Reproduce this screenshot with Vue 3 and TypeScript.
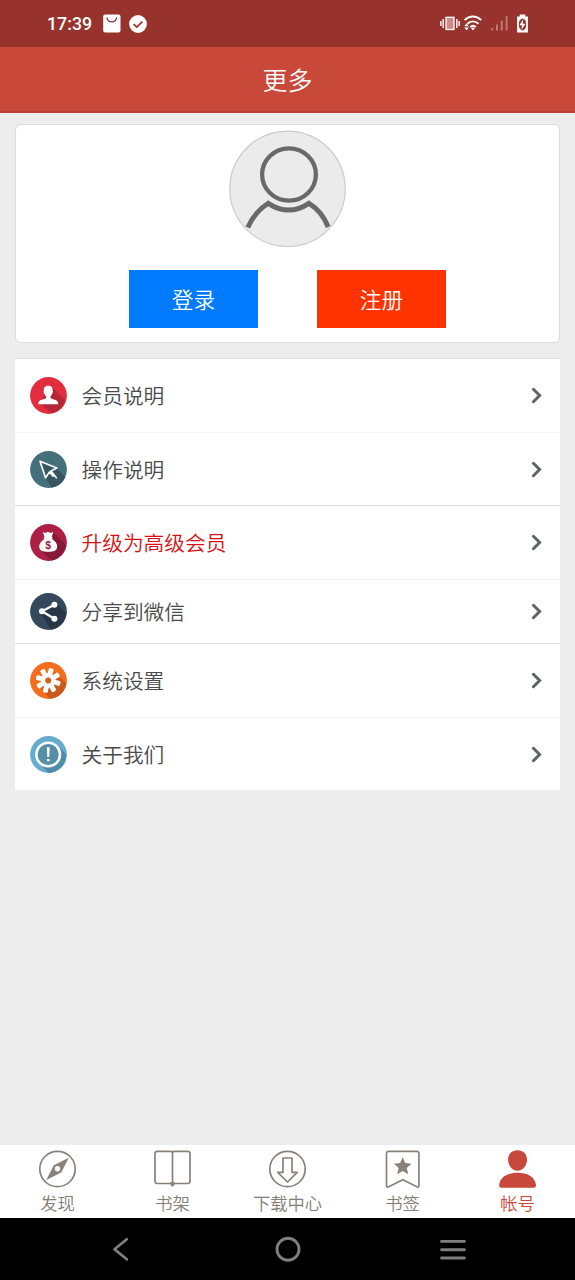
<script setup lang="ts">
type MenuIcon = 'user' | 'cursor' | 'money' | 'share' | 'gear' | 'info'
type TabIcon = 'compass' | 'book' | 'download' | 'bookmark' | 'account'

interface MenuItem {
  icon: MenuIcon
  label: string
  vip?: boolean
}

const menu: MenuItem[] = [
  { icon: 'user', label: '会员说明' },
  { icon: 'cursor', label: '操作说明' },
  { icon: 'money', label: '升级为高级会员', vip: true },
  { icon: 'share', label: '分享到微信' },
  { icon: 'gear', label: '系统设置' },
  { icon: 'info', label: '关于我们' },
]

const tabs: { icon: TabIcon; label: string }[] = [
  { icon: 'compass', label: '发现' },
  { icon: 'book', label: '书架' },
  { icon: 'download', label: '下载中心' },
  { icon: 'bookmark', label: '书签' },
  { icon: 'account', label: '帐号' },
]

const teeth: number[] = [15, 60, 105, 150, 195, 240, 285, 330]
</script>

<template>
  <div class="screen">
    <div class="status">
      <div class="status-left">
        <span class="clock">17:39</span>
        <svg class="s-bag" width="18" height="19" viewBox="0 0 18 19">
          <rect x="0.2" y="0.5" width="17.3" height="18" rx="2" fill="#fff" />
          <path d="M4 3.4c.5 6 9 6 9.6 0" fill="none" stroke="#97332c" stroke-width="1.2" />
        </svg>
        <svg class="s-check" width="18" height="18" viewBox="0 0 18 18">
          <circle cx="9" cy="9" r="8.9" fill="#fff" />
          <path d="M4.6 9.1l3.2 3 5.6-5.4" fill="none" stroke="#97332c" stroke-width="1.8" />
        </svg>
      </div>
      <div class="status-right">
        <svg width="94" height="20" viewBox="0 0 94 20">
          <rect x="6" y="3.3" width="8" height="12.2" fill="#cc8a88" stroke="#fff" stroke-width="1.3" />
          <path d="M0.9 7.1v4.8M3.2 5v9M16.8 5v9M19.1 7.1v4.8" stroke="#fff" stroke-width="1.4" />
          <g fill="none" stroke="#fff" stroke-width="2">
            <path d="M24.6 6.1c4.9-4.8 11.7-4.8 16.6 0" />
            <path d="M27.4 9.8c3.4-3.2 7.7-3.2 11.1 0" />
            <path d="M30.3 13.1c1.8-1.6 3.8-1.6 5.5 0" />
          </g>
          <path d="M30.9 13.8h4.2L33 16.6zM24.3 12.2l2.3-3 2.3 3zM24.3 13.6l2.3 3 2.3-3z" fill="#fff" />
          <path d="M52.3 14v2.5M57 10.5v6M61.8 6.8v9.7M66.6 2.3v14.2" stroke="#c17772" stroke-width="2" />
          <path d="M79.7 0.4h5.6v2.1h2.6v16H77.1v-16h2.6z" fill="#fff" />
          <ellipse cx="82.5" cy="10.5" rx="3.7" ry="6" fill="#97332c" />
          <path d="M83.3 5l-3.9 6.2h2.6l-.6 4.9 4-6.3h-2.7z" fill="#fff" />
        </svg>
      </div>
    </div>

    <header class="header">更多</header>

    <main class="content">
      <section class="profile">
        <svg class="avatar" width="117" height="117" viewBox="0 0 117 117">
          <circle cx="58.5" cy="58.8" r="57.7" fill="#ebebeb" stroke="#cbcbcb" stroke-width="1.2" />
          <ellipse cx="60" cy="44.5" rx="26.9" ry="26.2" fill="none" stroke="#696969" stroke-width="4.3" />
          <path
            d="M18.8 97.5C23.5 87 30 78.9 39.2 73.3C52.8 82.2 66.6 82.2 79.9 73.3C89 78.7 94.8 85.9 99.2 97"
            fill="none" stroke="#696969" stroke-width="5"
          />
        </svg>
        <div class="actions">
          <button class="btn login">登录</button>
          <button class="btn register">注册</button>
        </div>
      </section>

      <ul class="menu">
        <li v-for="item in menu" :key="item.icon" class="row" :class="item.icon">
          <svg class="row-icon" width="37" height="37" viewBox="0 0 37 37">
            <template v-if="item.icon === 'user'">
              <circle cx="18.5" cy="18.5" r="18.4" fill="#e12d3d" />
              <path d="M22 10l13 13a18.4 18.4 0 0 1-13 13.2L9 26z" fill="#b42736" />
              <path
                d="M18.4 8.8c-3.3 0-4.9 1.9-4.5 4.7-.8.6-.3 2.6.5 2.9.3 1.3.9 2.1 1.7 2.8v1.8c-1.9 1.5-6.6 1.5-7.5 4.1-.3.7-.3 1.5-.3 2.2h19.9c0-.8 0-1.5-.3-2.2-1-2.6-5.6-2.6-7.4-4.1v-1.8c.8-.7 1.3-1.5 1.6-2.8.8-.3 1.3-2.3.5-2.9.4-2.8-1.2-4.7-4.2-4.7z"
                fill="#fff"
              />
            </template>
            <template v-else-if="item.icon === 'cursor'">
              <circle cx="18.5" cy="18.5" r="18.4" fill="#44707b" />
              <path d="M10 10.5l16.6 6.700 8.800 8.700a18.400 18.400 0 0 1-13.700 10.800L15.800 27z" fill="#365662" />
              <path
                d="M10 10.300l16.800 6.700-5.800 3 5.300 6.800M10 10.300l5.600 16.400 3.900-5.800 3.600 4.200"
                fill="none" stroke="#fff" stroke-width="1.700" stroke-linejoin="round" stroke-linecap="round"
              />
            </template>
            <template v-else-if="item.icon === 'money'">
              <circle cx="18.500" cy="18.500" r="18.400" fill="#ae1f45" />
              <path d="M23 8l12.800 13A18.400 18.400 0 0 1 21 36.600L11 26.500z" fill="#85193a" />
              <path
                d="M12.800 8l2.600.9L18 7.700l2.400 1.200L23.300 8l-1.500 4.800c1.100.8 1.100 1.400.2 2.100 3.500 2 5.200 4.800 5.200 7.500 0 3.900-3.300 5.400-8.900 5.400s-9.100-1.500-9.100-5.400c0-2.700 1.900-5.500 5.200-7.500-.9-.7-.9-1.300.2-2.100z"
                fill="#fff"
              />
              <text x="18.200" y="24.500" class="dollar">$</text>
            </template>
            <template v-else-if="item.icon === 'share'">
              <circle cx="18.500" cy="18.500" r="18.400" fill="#34495c" />
              <path d="M26.500 10.500l9.800 9.800A18.400 18.400 0 0 1 21.200 36.700L10 20z" fill="#273747" />
              <path d="M24.400 11.800L12 18.300l12.400 7.400" fill="none" stroke="#fff" stroke-width="2.200" />
              <circle cx="24.400" cy="11.800" r="3" fill="#fff" />
              <circle cx="12" cy="18.300" r="3" fill="#fff" />
              <circle cx="24.400" cy="25.700" r="3" fill="#fff" />
            </template>
            <template v-else-if="item.icon === 'gear'">
              <circle cx="18.500" cy="18.500" r="18.400" fill="#f56d1d" />
              <path d="M25 10l11.400 11.500A18.400 18.400 0 0 1 20 36.800L11 27z" fill="#c95a1b" />
              <path
                v-for="a in teeth" :key="a" d="M15.700 6.500q2.500-1.200 5 0L20.600 14h-4.800z"
                fill="#fff" :transform="`rotate(${a} 18.2 18.5)`"
              />
              <circle cx="18.200" cy="18.500" r="5" fill="none" stroke="#fff" stroke-width="4.600" />
              <circle cx="18.200" cy="18.500" r="2.900" fill="#d9601c" />
            </template>
            <template v-else>
              <circle cx="18.500" cy="18.500" r="18.400" fill="#65acce" />
              <path d="M27.500 9.500l8.700 8.700A18.400 18.400 0 0 1 18.800 36.900L9.300 27.400z" fill="#4e8ca8" />
              <circle cx="18.200" cy="18.500" r="11.800" fill="#568fa8" stroke="#fff" stroke-width="2.500" />
              <path d="M16.800 11.200h2.900l-.5 9.900h-1.900zM17 23h2.500v2.300H17z" fill="#fff" />
            </template>
          </svg>
          <span class="row-label" :class="{ vip: item.vip }">{{ item.label }}</span>
          <svg class="chevron" width="12" height="17" viewBox="0 0 12 17">
            <path d="M2.400 2.300l6.200 6.200-6.200 6.200" fill="none" stroke="#606366" stroke-width="3" stroke-linecap="round" />
          </svg>
        </li>
      </ul>
    </main>

    <nav class="tabs">
      <div v-for="tab in tabs" :key="tab.icon" class="tab" :class="{ active: tab.icon === 'account' }">
        <svg width="39" height="40" viewBox="0 0 39 40" fill="none" stroke="#8a8279" stroke-width="1.700">
          <template v-if="tab.icon === 'compass'">
            <circle cx="19.500" cy="20" r="17.700" />
            <path d="M30.800 8.700L23.200 23.500 8.300 31l7.500-14.700z" fill="#8a8279" stroke="none" />
            <circle cx="19.500" cy="19.700" r="2.700" fill="#fff" stroke="none" />
          </template>
          <template v-else-if="tab.icon === 'book'">
            <path d="M19.500 34.500H4.200q-2.200 0-2.200-2.200V4.500q0-2.200 2.200-2.200h13.500q1.800 0 1.800 1.500 0-1.500 1.800-1.500h13.500q2.200 0 2.200 2.200v27.800q0 2.200-2.200 2.200H19.500zM19.500 3.800v30.700" />
            <path d="M16.500 34.500l1.500-1.500h3l1.500 1.500-3 3.500z" fill="#8a8279" stroke="none" />
          </template>
          <template v-else-if="tab.icon === 'download'">
            <circle cx="19.500" cy="20" r="17.700" />
            <path d="M15 9h9v14.300h5.200L19.500 33l-9.700-9.700H15z" stroke-linejoin="round" />
          </template>
          <template v-else-if="tab.icon === 'bookmark'">
            <path d="M3.500 36.500V4.500q0-2.200 2.200-2.200h28q2.200 0 2.200 2.200v32q0 2.300-2.100 1.300l-14-7-14.100 7q-2.200 1-2.200-1.300z" />
            <path d="M19.700 8.200l2.600 5.900 6.200.6-4.700 4.200 1.400 6.400-5.500-3.300-5.500 3.300 1.400-6.400-4.700-4.200 6.200-.6z" fill="#8a8279" stroke="none" />
          </template>
          <template v-else>
            <path d="M19.500 1.300c-5.800 0-9.400 3.900-9.400 9.200 0 6 3.900 11.200 9.400 11.200S29 16.500 29 10.500c0-5.300-3.700-9.200-9.500-9.200z" fill="#c8483a" stroke="none" />
            <path d="M1.100 36.200C1.800 28.300 9.200 23.800 19.600 23.800S37.300 28.300 38 36.200q.2 2.600-2.300 2.600H3.400q-2.500 0-2.300-2.600z" fill="#c8483a" stroke="none" />
          </template>
        </svg>
        <span>{{ tab.label }}</span>
      </div>
    </nav>

    <div class="system-nav">
      <svg width="18" height="25" viewBox="0 0 18 25"><path d="M14.800 2.200L2.500 12.300l12.300 10" fill="none" stroke="#808080" stroke-width="2.700" stroke-linecap="round" stroke-linejoin="round" /></svg>
      <svg class="home" width="26" height="26" viewBox="0 0 26 26"><circle cx="13" cy="13.300" r="11" fill="none" stroke="#808080" stroke-width="2.900" /></svg>
      <svg width="26" height="22" viewBox="0 0 26 22"><path d="M1.600 3.400h22.800M1.600 11.700h22.800M1.600 20h22.800" stroke="#808080" stroke-width="2.900" stroke-linecap="round" /></svg>
    </div>
  </div>
</template>

<style>
body {
  background: #ededed;
}
</style>

<style scoped>
.screen {
  width: 575px;
  height: 1280px;
  display: flex;
  flex-direction: column;
  background: #ededed;
  font-family: "Noto Sans CJK SC", sans-serif;
  font-weight: 350;
  overflow: hidden;
}
svg {
  display: block;
  flex: none;
}
.status {
  height: 47px;
  flex: none;
  box-sizing: border-box;
  padding: 0 41px 0 47px;
  display: flex;
  align-items: center;
  justify-content: space-between;
  background: #97332c;
}
.status-left {
  display: flex;
  align-items: center;
}
.clock {
  width: 56px;
  padding-top: 1px;
  font: 500 17.800px/24px Roboto, sans-serif;
  color: #fff;
}
.s-check {
  margin-left: 8px;
}
.header {
  height: 66px;
  flex: none;
  box-sizing: border-box;
  border-bottom: 2px solid #b94238;
  background: #c8483a;
  color: #fff;
  font-size: 25px;
  line-height: 65px;
  text-align: center;
}
.content {
  flex: 1;
  padding: 11px 15px 0;
}
.profile {
  box-sizing: border-box;
  height: 219px;
  padding-top: 5px;
  border: 1px solid #dcdcdc;
  border-radius: 6px;
  background: #fff;
  display: flex;
  flex-direction: column;
  align-items: center;
}
.actions {
  display: flex;
  gap: 59px;
  margin-top: 23px;
}
.btn {
  width: 129px;
  height: 58px;
  padding: 0 0 1px;
  border: 0;
  color: #fff;
  font: inherit;
  font-size: 21.700px;
}
.login {
  background: #007aff;
}
.register {
  background: #ff3300;
}
.menu {
  margin: 15px 0 0;
  padding: 0;
  list-style: none;
  background: #fff;
}
.row {
  box-sizing: border-box;
  height: 74px;
  padding: 0 17px 0 14.500px;
  display: flex;
  align-items: center;
  border-top: 1px solid #f4f4f4;
}
.row.user,
.row.money,
.row.gear {
  border-top-color: #dedede;
}
.row.cursor,
.row.info {
  height: 73px;
}
.row.share {
  height: 64px;
}
.row-label {
  flex: 1;
  margin-left: 15px;
  padding-bottom: 1px;
  font-size: 20.700px;
  line-height: 30px;
  color: #4a4a4a;
}
.row.cursor .row-label,
.row.info .row-label {
  padding-bottom: 0;
}
.row-label.vip {
  color: #d60f15;
}
.dollar {
  font: 700 10.500px "Liberation Sans", sans-serif;
  fill: #8f1c3e;
  text-anchor: middle;
}
.tabs {
  height: 73px;
  flex: none;
  display: grid;
  grid-template-columns: repeat(5, 1fr);
  background: #fff;
}
.tab {
  display: flex;
  flex-direction: column;
  align-items: center;
  padding-top: 4px;
  color: #857e76;
  font-size: 17.300px;
  line-height: 27px;
}
.tab.active {
  color: #c8483a;
}
.system-nav {
  height: 62px;
  flex: none;
  box-sizing: border-box;
  padding: 0 109px 0 112px;
  display: flex;
  align-items: center;
  justify-content: space-between;
  background: #000;
}
.home {
  margin-left: 5px;
}
</style>
